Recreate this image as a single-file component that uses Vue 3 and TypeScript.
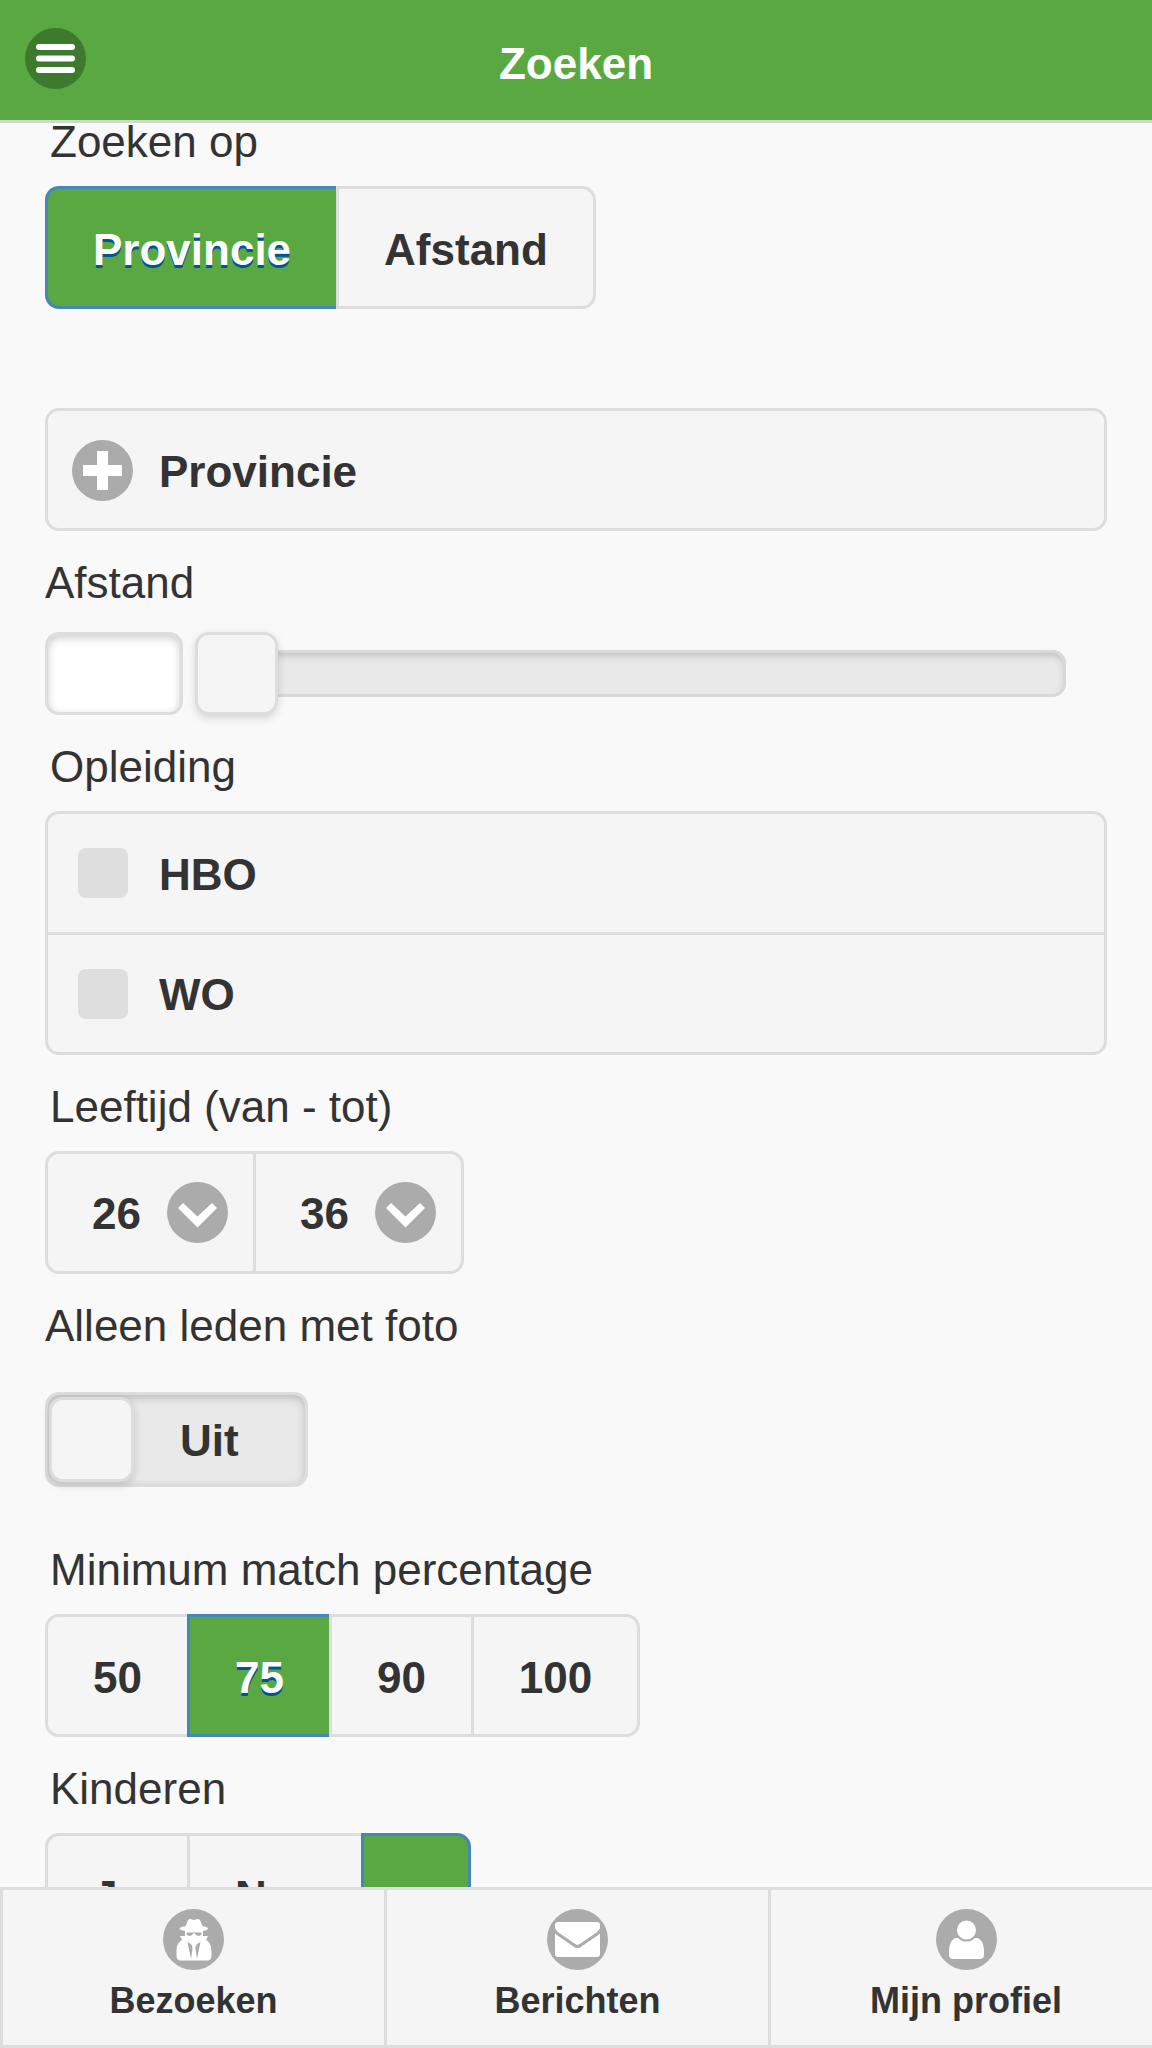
<script setup lang="ts">
import { ref } from 'vue'

interface Option {
  value: string
  label: string
}

interface TabItem {
  icon: 'spy' | 'mail' | 'user'
  label: string
}

const searchModes: Option[] = [
  { value: 'provincie', label: 'Provincie' },
  { value: 'afstand', label: 'Afstand' },
]
const educations: string[] = ['HBO', 'WO']
const percentages: Option[] = ['50', '75', '90', '100'].map((v) => ({ value: v, label: v }))
const childOptions: Option[] = [
  { value: 'ja', label: 'Ja' },
  { value: 'nee', label: 'Nee' },
  { value: 'geen', label: '-' },
]
const ages: number[] = Array.from({ length: 63 }, (_, i) => i + 18)
const tabs: TabItem[] = [
  { icon: 'spy', label: 'Bezoeken' },
  { icon: 'mail', label: 'Berichten' },
  { icon: 'user', label: 'Mijn profiel' },
]

const mode = ref('provincie')
const provinceOpen = ref(false)
const distanceText = ref('')
const distance = ref(0)
const selectedEducations = ref<string[]>([])
const ageFrom = ref(26)
const ageTo = ref(36)
const photoOnly = ref(false)
const minMatch = ref('75')
const children = ref('geen')
</script>

<template>
  <div class="page">
    <header class="top">
      <button class="menu" type="button" aria-label="Menu">
        <svg class="icon" viewBox="0 0 61 61" aria-hidden="true">
          <circle cx="30.5" cy="30.5" r="30.5" fill="#3d7a2e" />
          <path d="M14 19H47M14 30.5H47M14 42H47" stroke="#fff" stroke-width="6" stroke-linecap="round" />
        </svg>
      </button>
      <h1 class="title">Zoeken</h1>
    </header>

    <main class="content">
      <form class="form" @submit.prevent>
        <fieldset class="field">
          <legend class="caption inset">Zoeken op</legend>
          <div class="segments">
            <label v-for="o in searchModes" :key="o.value" class="segment" :class="{ active: mode === o.value }">
              <input v-model="mode" class="hidden-input" type="radio" name="mode" :value="o.value" />{{ o.label }}
            </label>
          </div>
        </fieldset>

        <button class="panel" type="button" :aria-expanded="provinceOpen" @click="provinceOpen = !provinceOpen">
          <svg class="icon" viewBox="0 0 61 61" aria-hidden="true">
            <circle cx="30.5" cy="30.5" r="30.5" fill="#ababab" />
            <path d="M25 11H36V25H50V36H36V50H25V36H11V25H25Z" fill="#fff" />
          </svg>
          <span>Provincie</span>
        </button>

        <div class="field">
          <label class="caption" for="distance">Afstand</label>
          <div class="slider-row">
            <input id="distance" v-model="distanceText" class="number" type="text" inputmode="numeric" />
            <input v-model.number="distance" class="range" type="range" min="0" max="300" aria-label="Afstand" />
          </div>
        </div>

        <fieldset class="field">
          <legend class="caption inset">Opleiding</legend>
          <div class="checks">
            <label v-for="e in educations" :key="e" class="check-row">
              <input v-model="selectedEducations" class="check" type="checkbox" :value="e" />
              <span>{{ e }}</span>
            </label>
          </div>
        </fieldset>

        <fieldset class="field">
          <legend class="caption inset">Leeftijd (van - tot)</legend>
          <div class="selects">
            <div class="select-box">
              <select v-model="ageFrom" class="select" aria-label="Leeftijd van">
                <option v-for="a in ages" :key="a" :value="a">{{ a }}</option>
              </select>
              <svg class="icon arrow" viewBox="0 0 61 61" aria-hidden="true">
                <circle cx="30.5" cy="30.5" r="30.5" fill="#ababab" />
                <path d="M11 26L16 21L30.5 34.5L45 21L50 26L30.5 45.5Z" fill="#fff" />
              </svg>
            </div>
            <div class="select-box">
              <select v-model="ageTo" class="select" aria-label="Leeftijd tot">
                <option v-for="a in ages" :key="a" :value="a">{{ a }}</option>
              </select>
              <svg class="icon arrow" viewBox="0 0 61 61" aria-hidden="true">
                <circle cx="30.5" cy="30.5" r="30.5" fill="#ababab" />
                <path d="M11 26L16 21L30.5 34.5L45 21L50 26L30.5 45.5Z" fill="#fff" />
              </svg>
            </div>
          </div>
        </fieldset>

        <div class="field flip-field">
          <label class="caption" for="photo">Alleen leden met foto</label>
          <label class="flip" :class="{ on: photoOnly }">
            <input id="photo" v-model="photoOnly" class="handle" type="checkbox" role="switch" />
            <span>{{ photoOnly ? 'Aan' : 'Uit' }}</span>
          </label>
        </div>

        <fieldset class="field">
          <legend class="caption inset">Minimum match percentage</legend>
          <div class="segments">
            <label v-for="o in percentages" :key="o.value" class="segment" :class="{ active: minMatch === o.value }">
              <input v-model="minMatch" class="hidden-input" type="radio" name="match" :value="o.value" />{{ o.label }}
            </label>
          </div>
        </fieldset>

        <fieldset class="field">
          <legend class="caption inset">Kinderen</legend>
          <div class="segments">
            <label v-for="o in childOptions" :key="o.value" class="segment" :class="{ active: children === o.value }">
              <input v-model="children" class="hidden-input" type="radio" name="children" :value="o.value" />{{ o.label }}
            </label>
          </div>
        </fieldset>
      </form>
    </main>

    <nav class="tabs">
      <a v-for="t in tabs" :key="t.label" class="tab" href="#">
        <svg class="icon" viewBox="0 0 61 61" aria-hidden="true">
          <circle cx="30.5" cy="30.5" r="30.5" fill="#ababab" />
          <g v-if="t.icon === 'spy'">
            <path
              d="M23 17C24 13 25 10 27 10C29 10 29.5 11 31 11S33 10 35 10C37 10 38 13 39.5 17C42 17.5 45 18.5 45 19.5C45 21 42 21.5 40 22V27H45L43 31C47 33 48.5 37 48.5 43V46C48.5 50 47 51.5 44 51.5H18C15 51.5 13.5 50 13.5 46V43C13.5 37 15 33 19 31L17 27H22V22C20 21.5 16.5 21 16.5 19.5C16.5 18.5 20 17.5 23 17Z"
              fill="#fff"
            />
            <path d="M23.500 23.5H38.500V25C38 27.500 33 27.500 32 24.500H30C29 27.500 24 27.500 23.500 25Z" fill="#ababab" />
            <path d="M24.500 33Q30 35 29.500 40L28 50ZM37.500 33Q32 35 32.500 40L34 50Z" fill="#ababab" />
          </g>
          <g v-else-if="t.icon === 'mail'">
            <rect x="8" y="13" width="45" height="35" rx="3" fill="#fff" />
            <path d="M7 20Q8 23 11 25L27 36Q30.5 39 34 36L50 25Q53 23 54 20" fill="none" stroke="#ababab" stroke-width="3" />
          </g>
          <g v-else>
            <path
              d="M20 29H41C46 30 48 36 48 43V45C48 48.5 47 50 43 50H18C14 50 13 48.5 13 45V43C13 36 15 30 20 29Z"
              fill="#fff"
            />
            <circle cx="30.5" cy="21" r="10.5" fill="#fff" stroke="#ababab" stroke-width="2" />
          </g>
        </svg>
        <span>{{ t.label }}</span>
      </a>
    </nav>
  </div>
</template>

<style>
body {
  background: #f9f9f9;
}
</style>

<style scoped>
.page {
  display: flex;
  flex-direction: column;
  height: 100vh;
  overflow: hidden;
  background: #f9f9f9;
  color: #333;
  font-family: 'Liberation Sans', Arial, sans-serif;
  font-size: 44px;
}

.page * {
  box-sizing: border-box;
}

.icon {
  display: block;
  flex: none;
  width: 61px;
  height: 61px;
}

.top {
  display: grid;
  grid-template-columns: 61px 1fr 61px;
  flex: none;
  padding: 28px 25px 20px;
  border-bottom: 3px solid #cbdccb;
  background: #5aa842;
}

.menu {
  align-self: start;
  padding: 0;
  border: 0;
  background: none;
}

.title {
  margin: 0;
  color: #fff;
  font-size: 44px;
  line-height: 72px;
  text-align: center;
}

.content {
  flex: 1;
  min-height: 0;
  overflow-y: auto;
  scrollbar-width: none;
}

.form {
  display: flex;
  flex-direction: column;
  gap: 33px;
  padding: 0 45px 33px;
}

.field {
  min-width: 0;
  margin: 0;
  padding: 0;
  border: 0;
}

.caption {
  display: block;
  padding: 0;
  margin-bottom: 25px;
  line-height: 38px;
}

.inset {
  padding-left: 5px;
}

.segments,
.selects {
  display: flex;
}

.segment {
  position: relative;
  padding: 39px 45px 35px;
  border: 3px solid #ddd;
  border-right-width: 0;
  background: #f5f5f5;
  font-weight: bold;
  line-height: 43px;
}

.segment:first-child {
  border-radius: 14px 0 0 14px;
}

.segment:last-child {
  border-right-width: 3px;
  border-radius: 0 14px 14px 0;
}

.segment.active {
  border-color: #4686b8;
  background: #5aa842;
  color: #fff;
  text-shadow: 0 3px 0 #059;
}

.hidden-input {
  position: absolute;
  inset: 0;
  margin: 0;
  opacity: 0;
}

.panel {
  display: flex;
  align-items: center;
  gap: 26px;
  height: 123px;
  margin-top: 66px;
  padding: 2px 24px 0;
  border: 3px solid #ddd;
  border-radius: 14px;
  background: #f5f5f5;
  color: inherit;
  font: bold 44px/43px 'Liberation Sans', Arial, sans-serif;
}

.panel span,
.check-row span,
.flip span {
  padding-top: 2px;
}

.slider-row {
  display: flex;
  gap: 12px;
  padding: 5px 41px 0 0;
}

.number {
  width: 138px;
  height: 83px;
  padding: 0 16px;
  border: 3px solid #ddd;
  border-radius: 14px;
  background: #fff;
  box-shadow: inset 0 3px 9px rgba(0, 0, 0, 0.2);
  color: inherit;
  font: inherit;
}

.range {
  flex: 1;
  min-width: 0;
  height: 83px;
  margin: 0;
  appearance: none;
  background: none;
}

.range::-webkit-slider-runnable-track {
  height: 47px;
  border-radius: 14px;
  background: #e9e9e9;
  box-shadow: inset 0 0 0 3px #d9d9d9, inset 0 5px 9px rgba(0, 0, 0, 0.2);
}

.range::-webkit-slider-thumb {
  width: 83px;
  height: 83px;
  margin-top: -18px;
  box-sizing: border-box;
  appearance: none;
  border: 3px solid #ddd;
  border-radius: 14px;
  background: #f5f5f5;
  box-shadow: 0 3px 9px rgba(0, 0, 0, 0.15);
}

.checks {
  border: 3px solid #ddd;
  border-radius: 14px;
  background: #f5f5f5;
}

.check-row {
  display: flex;
  align-items: center;
  gap: 31px;
  height: 118px;
  padding: 0 30px;
  font-weight: bold;
  line-height: 43px;
}

.check-row + .check-row {
  height: 120px;
  border-top: 3px solid #ddd;
}

.check {
  width: 50px;
  height: 50px;
  margin: 0;
  appearance: none;
  border-radius: 8px;
  background: #dedede;
}

.check:checked {
  background: #5aa842;
}

.select-box {
  position: relative;
  border: 3px solid #ddd;
  background: #f5f5f5;
}

.select-box:first-child {
  border-right-width: 0;
  border-radius: 14px 0 0 14px;
}

.select-box:last-child {
  border-radius: 0 14px 14px 0;
}

.select {
  display: block;
  width: 205px;
  height: 117px;
  padding: 2px 86px 0 44px;
  appearance: none;
  border: 0;
  background: none;
  color: inherit;
  font: bold 44px/43px 'Liberation Sans', Arial, sans-serif;
}

.arrow {
  position: absolute;
  top: 28px;
  right: 25px;
  pointer-events: none;
}

.flip-field {
  margin-bottom: 31px;
}

.flip-field .caption {
  margin-bottom: 47px;
}

.flip {
  display: flex;
  align-items: center;
  gap: 46px;
  width: 263px;
  height: 95px;
  padding-left: 1px;
  border: 3px solid #ddd;
  border-radius: 14px;
  background: #e9e9e9;
  box-shadow: inset 0 3px 9px rgba(0, 0, 0, 0.2);
  font-weight: bold;
  line-height: 43px;
}

.flip.on {
  flex-direction: row-reverse;
  justify-content: flex-start;
  gap: 30px;
  background: #5aa842;
  color: #fff;
}

.handle {
  width: 85px;
  height: 85px;
  margin: 0;
  appearance: none;
  border: 3px solid #ddd;
  border-radius: 14px;
  background: #f5f5f5;
  box-shadow: 0 3px 9px rgba(0, 0, 0, 0.15);
}

.tabs {
  display: grid;
  grid-template-columns: repeat(3, 1fr);
  flex: none;
  border-top: 3px solid #ddd;
  border-bottom: 3px solid #ddd;
  background: #f5f5f5;
}

.tab {
  display: flex;
  flex-direction: column;
  align-items: center;
  gap: 11px;
  padding: 19px 0 24px;
  border-left: 3px solid #ddd;
  color: inherit;
  font-size: 36px;
  font-weight: bold;
  line-height: 40px;
  text-decoration: none;
}

.tab:last-child {
  padding-left: 9px;
}
</style>
